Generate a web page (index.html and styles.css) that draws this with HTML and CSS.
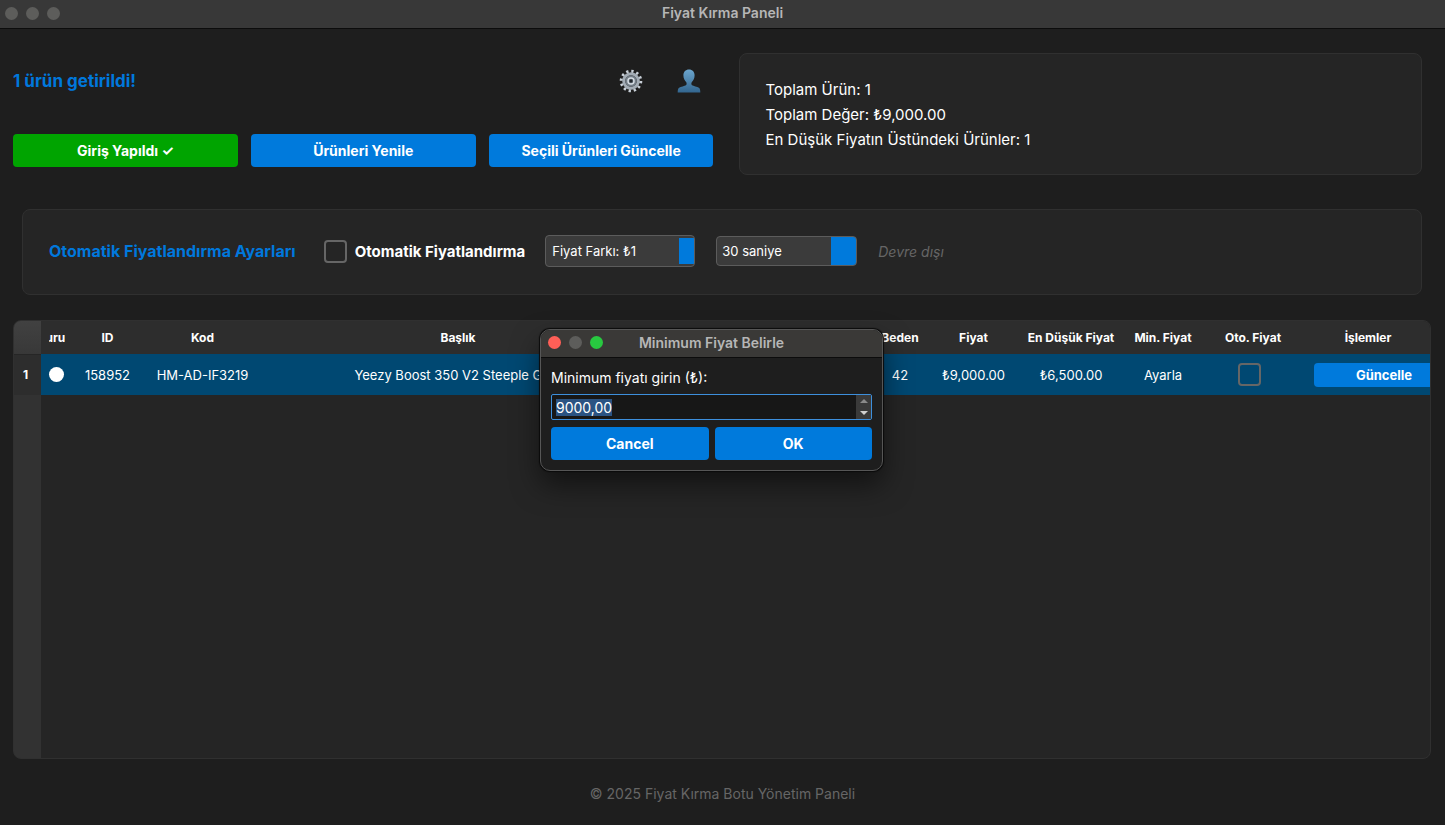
FILE: index.html
```html
<!DOCTYPE html>
<html lang="tr">
<head>
    <meta charset="UTF-8">
    <meta name="viewport" content="width=device-width, initial-scale=1.0">
    <title>Fiyat Kırma Paneli</title>
    <link rel="stylesheet" href="styles.css">
</head>
<body>
    <header class="titlebar">
        <div class="lights">
            <span class="light"></span>
            <span class="light"></span>
            <span class="light"></span>
        </div>
        <h1>Fiyat Kırma Paneli</h1>
    </header>

    <main>
        <div class="top">
            <section class="actions">
                <div class="status-row">
                    <p class="status">1 ürün getirildi!</p>
                    <button class="icon-button" type="button" aria-label="Ayarlar">
                        <svg width="24" height="24" viewBox="0 0 24 24" fill="none">
                            <circle cx="12" cy="12" r="9.8" stroke="#c9d0d8" stroke-width="3" stroke-dasharray="2.3 2.83"/>
                            <circle cx="12" cy="12" r="7.3" stroke="#a3acb5" stroke-width="3"/>
                            <circle cx="12" cy="12" r="5.8" fill="#737d87"/>
                            <circle cx="12" cy="12" r="3" fill="#4a535c" stroke="#d5dce3" stroke-width="1.5"/>
                            <circle cx="12" cy="12" r="1.2" fill="#20242a"/>
                        </svg>
                    </button>
                    <button class="icon-button" type="button" aria-label="Kullanıcı">
                        <svg width="24" height="24" viewBox="0 0 24 24">
                            <defs>
                                <linearGradient id="user-fill" x1="0" y1="0" x2="0" y2="1">
                                    <stop offset="0" stop-color="#6ba5cd"/>
                                    <stop offset="1" stop-color="#33668f"/>
                                </linearGradient>
                            </defs>
                            <path fill="url(#user-fill)" d="M12 .5c3.400 0 5.600 2.300 5.600 5.800 0 3.300-1.300 5.400-2.700 6.700-.7.700-.8 2.600.1 3.200 1.300.9 5.300 1.300 6.900 2.500 1.200.9 1.400 2.600 1.400 4.800H.7c0-2.200.2-3.900 1.400-4.800 1.600-1.200 5.600-1.600 6.900-2.500.9-.6.800-2.500.1-3.200C7.700 11.700 6.400 9.600 6.400 6.300 6.400 2.800 8.600.5 12 .5z"/>
                        </svg>
                    </button>
                </div>
                <div class="button-row">
                    <button class="btn btn-green" type="button">Giriş Yapıldı ✓</button>
                    <button class="btn" type="button">Ürünleri Yenile</button>
                    <button class="btn" type="button">Seçili Ürünleri Güncelle</button>
                </div>
            </section>

            <section class="panel stats">
                <p>Toplam Ürün: 1</p>
                <p>Toplam Değer: ₺9,000.00</p>
                <p>En Düşük Fiyatın Üstündeki Ürünler: 1</p>
            </section>
        </div>

        <section class="panel settings">
            <h2>Otomatik Fiyatlandırma Ayarları</h2>
            <label class="auto-label">
                <input class="check" type="checkbox">
                Otomatik Fiyatlandırma
            </label>
            <input class="spin" type="text" value="Fiyat Farkı: ₺1" aria-label="Fiyat farkı">
            <select class="interval" aria-label="Güncelleme aralığı">
                <option>30 saniye</option>
                <option>60 saniye</option>
            </select>
            <span class="disabled-note">Devre dışı</span>
        </section>

        <div class="table-box">
            <table>
                <colgroup>
                    <col class="c-no">
                    <col class="c-state">
                    <col class="c-id">
                    <col class="c-code">
                    <col class="c-title">
                    <col class="c-blank">
                    <col class="c-size">
                    <col class="c-price">
                    <col class="c-low">
                    <col class="c-min">
                    <col class="c-auto">
                    <col class="c-ops">
                </colgroup>
                <thead>
                    <tr>
                        <td class="corner"></td>
                        <th><span class="clip">Durum</span></th>
                        <th>ID</th>
                        <th>Kod</th>
                        <th>Başlık</th>
                        <th></th>
                        <th>Beden</th>
                        <th>Fiyat</th>
                        <th>En Düşük Fiyat</th>
                        <th>Min. Fiyat</th>
                        <th>Oto. Fiyat</th>
                        <th>İşlemler</th>
                    </tr>
                </thead>
                <tbody>
                    <tr class="selected">
                        <th class="row-no" scope="row">1</th>
                        <td><span class="dot"></span></td>
                        <td>158952</td>
                        <td>HM-AD-IF3219</td>
                        <td>Yeezy Boost 350 V2 Steeple Gray</td>
                        <td></td>
                        <td>42</td>
                        <td>₺9,000.00</td>
                        <td>₺6,500.00</td>
                        <td>Ayarla</td>
                        <td class="auto-cell"><input class="check" type="checkbox" aria-label="Oto. Fiyat"></td>
                        <td class="ops-cell"><button class="btn btn-small" type="button">Güncelle</button></td>
                    </tr>
                </tbody>
            </table>
        </div>
    </main>

    <footer>© 2025 Fiyat Kırma Botu Yönetim Paneli</footer>

    <!-- Minimum price window -->
    <div class="dialog" role="dialog" aria-labelledby="dialog-title">
        <div class="titlebar">
            <div class="lights">
                <span class="light red"></span>
                <span class="light"></span>
                <span class="light green"></span>
            </div>
            <h2 id="dialog-title">Minimum Fiyat Belirle</h2>
        </div>
        <form class="dialog-body">
            <label for="min-price">Minimum fiyatı girin (₺):</label>
            <div class="price-field">
                <input id="min-price" type="text" value="9000,00">
                <div class="steppers">
                    <button class="step" type="button" aria-label="Artır">
                        <svg width="8" height="4" viewBox="0 0 8 4"><path d="M0 4 4 0l4 4z" fill="#8a8a8a"/></svg>
                    </button>
                    <button class="step" type="button" aria-label="Azalt">
                        <svg width="8" height="4" viewBox="0 0 8 4"><path d="M0 0h8L4 4z" fill="#d0d0d0"/></svg>
                    </button>
                </div>
            </div>
            <div class="dialog-buttons">
                <button class="btn" type="button">Cancel</button>
                <button class="btn" type="button">OK</button>
            </div>
        </form>
    </div>

    <script>
        var priceInput = document.getElementById('min-price');
        priceInput.focus();
        priceInput.select();
    </script>
</body>
</html>
```
FILE: styles.css
```css
* {
    box-sizing: border-box;
}

body {
    margin: 0;
    min-height: 100vh;
    display: flex;
    flex-direction: column;
    position: relative;
    background-color: #1e1e1e;
    color: #fff;
    font-family: Inter, "Liberation Sans", sans-serif;
    font-size: 14px;
}

h1, h2, p {
    margin: 0;
}

button, input, select {
    font-family: inherit;
    color: inherit;
}

/* Window title bars */
.titlebar {
    display: grid;
    grid-template-columns: 1fr auto 1fr;
    align-items: center;
    height: 29px;
    padding: 0 5px 2px;
    background-color: #383838;
    border-bottom: 1px solid #0c0c0c;
}

.titlebar h1,
.titlebar h2 {
    font-size: 14px;
    line-height: 16px;
    font-weight: 600;
    color: #b6b6b6;
}

.lights {
    display: flex;
    gap: 8px;
}

.light {
    width: 13px;
    height: 13px;
    border-radius: 50%;
    background-color: #5d5d5b;
}

.light.red {
    background-color: #ff5f57;
}

.light.green {
    background-color: #28c840;
}

main {
    flex: 1;
    display: flex;
    flex-direction: column;
    padding: 24px 14px 0 13px;
}

.top {
    display: grid;
    grid-template-columns: 700fr 683fr;
    gap: 25px;
    padding-right: 9px;
}

.status-row {
    display: flex;
    align-items: center;
    height: 56px;
    padding-right: 13px;
}

.status {
    flex: 1;
    font-size: 17px;
    font-weight: 700;
    color: #0078dc;
}

.icon-button {
    display: flex;
    margin-left: 34px;
    padding: 0;
    border: 0;
    background: none;
}

.button-row {
    display: grid;
    grid-template-columns: repeat(3, 1fr);
    gap: 13px;
    margin-top: 25px;
}

.btn {
    height: 33px;
    padding: 0;
    border: 0;
    border-radius: 4px;
    background-color: #007adc;
    font-size: 14px;
    font-weight: 700;
}

.btn-green {
    background-color: #00a400;
}

.panel {
    border: 1px solid #303030;
    border-radius: 8px;
    background-color: #252525;
}

.stats {
    height: 122px;
    padding: 23px 26px;
    font-size: 15px;
    line-height: 25px;
}

/* Auto pricing settings */
.settings {
    display: flex;
    align-items: center;
    height: 86px;
    margin: 34px 9px 25px;
    padding: 0 26px 2px;
}

.settings h2 {
    font-size: 16px;
    font-weight: 700;
    color: #0078dc;
}

.auto-label {
    display: flex;
    align-items: center;
    gap: 8px;
    margin-left: 28px;
    font-size: 15px;
    font-weight: 700;
}

.check {
    display: block;
    appearance: none;
    width: 23px;
    height: 23px;
    margin: 0;
    border: 2px solid #666;
    border-radius: 4px;
}

.spin,
.interval {
    border: 1px solid #5c5c5c;
    border-radius: 4px;
    background-color: #3b3b3b;
    background-image: linear-gradient(#007adc, #007adc);
    background-repeat: no-repeat;
    background-position: right center;
    font-size: 13px;
}

.spin {
    width: 150px;
    height: 32px;
    margin-left: 20px;
    padding: 0 20px 0 6px;
    background-size: 15px 26px;
}

.interval {
    appearance: none;
    width: 141px;
    height: 30px;
    margin-left: 21px;
    padding: 0 30px 0 5px;
    background-size: 25px 28px;
}

.disabled-note {
    margin-left: 21px;
    font-style: italic;
    color: #666;
}

/* Product table */
.table-box {
    flex: 1;
    overflow: hidden;
    border: 1px solid #303030;
    border-radius: 8px;
    background: linear-gradient(to right, #323232 27px, #252525 27px);
}

table {
    width: 100%;
    table-layout: fixed;
    border-collapse: collapse;
}

.c-no { width: 27px; }
.c-state { width: 31px; }
.c-id { width: 71px; }
.c-code { width: 119px; }
.c-blank { width: 215px; }
.c-size { width: 62px; }
.c-price { width: 85px; }
.c-low { width: 110px; }
.c-min { width: 74px; }
.c-auto { width: 106px; }
.c-ops { width: 124px; }

th, td {
    padding: 0;
    text-align: center;
    white-space: nowrap;
}

th {
    background-color: #2d2d2d;
    font-size: 12px;
    font-weight: 700;
}

thead tr {
    height: 33px;
}

.corner {
    background: linear-gradient(#414141, #383838);
    border-bottom: 1px solid #262626;
}

.clip {
    display: flex;
    justify-content: center;
    width: 16px;
    margin: 0 auto;
    overflow: hidden;
}

.selected {
    height: 41px;
}

.selected td {
    background-color: #004872;
    font-size: 13px;
}

.row-no {
    padding-right: 4px;
}

.dot {
    display: block;
    width: 15px;
    height: 15px;
    margin: 0 auto;
    border-radius: 50%;
    background-color: #fff;
}

.auto-cell {
    padding-right: 8px;
}

.auto-cell .check {
    margin: 0 auto;
}

.ops-cell {
    padding-left: 8px;
    overflow: hidden;
}

.btn-small {
    display: block;
    width: 140px;
    height: 24px;
    font-size: 13px;
}

footer {
    padding: 25px 0 21px;
    text-align: center;
    line-height: 20px;
    color: #666;
}

/* Minimum price window, floats over the panel */
.dialog {
    position: absolute;
    top: 329px;
    left: 540px;
    width: 343px;
    border: 1px solid #565656;
    border-radius: 10px;
    background-color: #1e1e1e;
    box-shadow: 0 0 1px 1px #0a0a0a, 0 14px 28px rgba(0, 0, 0, 0.5);
    overflow: hidden;
}

.dialog .titlebar {
    height: 28px;
    padding: 0 7px 2px;
    background-color: #3a3937;
}

.dialog-body {
    display: flex;
    flex-direction: column;
    padding: 11px 10px 10px;
}

.dialog-body label {
    line-height: 18px;
}

.price-field {
    display: flex;
    height: 26px;
    margin: 7px 0;
    border: 1px solid #3d8fdc;
    border-radius: 2px;
    background-color: #171717;
}

.price-field input {
    flex: 1;
    min-width: 0;
    padding: 0 4px;
    border: 0;
    outline: 0;
    background: none;
    font-size: 14px;
    caret-color: transparent;
}

.price-field input::selection {
    background-color: #2b5382;
    color: #fff;
}

.steppers {
    display: flex;
    flex-direction: column;
    width: 15px;
    background-color: #3a3a3a;
}

.step {
    flex: 1;
    display: flex;
    align-items: center;
    justify-content: center;
    padding: 0;
    border: 0;
    background: none;
}

.dialog-buttons {
    display: grid;
    grid-template-columns: 1fr 1fr;
    gap: 6px;
}
```
